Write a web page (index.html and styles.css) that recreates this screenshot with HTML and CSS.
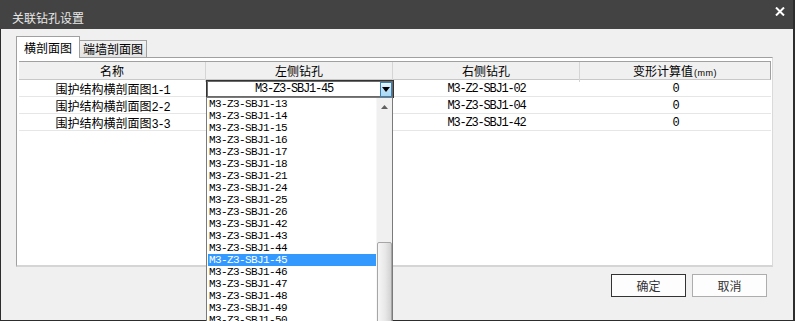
FILE: index.html
```html
<!DOCTYPE html>
<html lang="zh-CN">
<head>
  <meta charset="UTF-8">
  <title>关联钻孔设置</title>
  <link rel="stylesheet" href="styles.css">
</head>
<body>

<div class="window">
  <div class="titlebar">
    <span class="title">关联钻孔设置</span>
    <svg class="close" width="10" height="9" viewBox="0 0 10 9">
      <path d="M1 0.5 L9 8.5 M9 0.5 L1 8.5" stroke="#fff" stroke-width="2"/>
    </svg>
  </div>

  <div class="client">
    <div class="tabs">
      <div class="tab active">横剖面图</div>
      <div class="tab">端墙剖面图</div>
    </div>

    <div class="page">
      <div class="grid">
        <div class="row head">
          <div class="cell">名称</div>
          <div class="cell">左侧钻孔</div>
          <div class="cell">右侧钻孔</div>
          <div class="cell">变形计算值<span class="unit">(mm)</span></div>
        </div>

        <div class="row">
          <div class="cell">围护结构横剖面图<span class="mono">1-1</span></div>
          <div class="cell edit">
            <div class="combo">
              <span class="combo-text mono">M3-Z3-SBJ1-45</span>
              <span class="drop-btn">
                <svg width="8" height="5" viewBox="0 0 8 5"><path d="M0 0 H8 L4 5 Z" fill="#000"/></svg>
              </span>
              <div class="droplist">
                <ul class="items">
                  <li>M3-Z3-SBJ1-13</li>
                  <li>M3-Z3-SBJ1-14</li>
                  <li>M3-Z3-SBJ1-15</li>
                  <li>M3-Z3-SBJ1-16</li>
                  <li>M3-Z3-SBJ1-17</li>
                  <li>M3-Z3-SBJ1-18</li>
                  <li>M3-Z3-SBJ1-21</li>
                  <li>M3-Z3-SBJ1-24</li>
                  <li>M3-Z3-SBJ1-25</li>
                  <li>M3-Z3-SBJ1-26</li>
                  <li>M3-Z3-SBJ1-42</li>
                  <li>M3-Z3-SBJ1-43</li>
                  <li>M3-Z3-SBJ1-44</li>
                  <li class="selected">M3-Z3-SBJ1-45</li>
                  <li>M3-Z3-SBJ1-46</li>
                  <li>M3-Z3-SBJ1-47</li>
                  <li>M3-Z3-SBJ1-48</li>
                  <li>M3-Z3-SBJ1-49</li>
                  <li>M3-Z3-SBJ1-50</li>
                </ul>
                <div class="vscroll">
                  <div class="up">
                    <svg width="7" height="4" viewBox="0 0 7 4"><path d="M0 4 H7 L3.5 0 Z" fill="#606060"/></svg>
                  </div>
                  <div class="thumb"></div>
                </div>
              </div>
            </div>
          </div>
          <div class="cell mono">M3-Z2-SBJ1-02</div>
          <div class="cell mono">0</div>
        </div>

        <div class="row">
          <div class="cell">围护结构横剖面图<span class="mono">2-2</span></div>
          <div class="cell"></div>
          <div class="cell mono">M3-Z3-SBJ1-04</div>
          <div class="cell mono">0</div>
        </div>

        <div class="row">
          <div class="cell">围护结构横剖面图<span class="mono">3-3</span></div>
          <div class="cell"></div>
          <div class="cell mono">M3-Z3-SBJ1-42</div>
          <div class="cell mono">0</div>
        </div>
      </div>
    </div>

    <div class="buttons">
      <button class="btn default">确定</button>
      <button class="btn">取消</button>
    </div>
  </div>
</div>

</body>
</html>
```

FILE: styles.css
```css
* {
  box-sizing: border-box;
}
html, body {
  margin: 0;
}
body {
  width: 795px;
  height: 321px;
  overflow: hidden;
  background: #2d2d2d;
  font-family: "Noto Sans CJK SC", sans-serif;
  font-size: 12px;
  color: #000;
}
.window {
  width: 793px;
  height: 320px;
  display: flex;
  flex-direction: column;
}
.titlebar {
  height: 29px;
  background: #434343;
  display: flex;
  justify-content: space-between;
  align-items: flex-start;
  padding: 10px 8px 0 12px;
}
.title {
  color: #e8e8e8;
  font-size: 12px;
  line-height: 16px;
}
.close {
  margin-top: -3px;
}
.client {
  flex: 1;
  margin-left: 1px;
  background: #f0f0f0;
  padding: 7px 20px 0 15px;
}

/* tabs */
.tabs {
  height: 21px;
  display: flex;
  align-items: flex-end;
}
.tab {
  height: 17px;
  width: 67px;
  line-height: 16px;
  text-align: center;
  border: 1px solid #a0a0a0;
  border-bottom: none;
  border-left: none;
  background: linear-gradient(#f2f2f2, #e3e3e3);
}
.tab.active {
  position: relative;
  z-index: 1;
  height: 22px;
  width: 64px;
  margin-bottom: -1px;
  border-left: 1px solid #a0a0a0;
  background: #fff;
  line-height: 22px;
}

/* page + grid */
.page {
  height: 210px;
  background: #fff;
  border-top: 1px solid #a0a0a0;
  border-left: 1px solid #a0a0a0;
  border-right: 1px solid #dadada;
  border-bottom: 2px solid #d5d5d5;
  padding: 3px 1px 0 2px;
}
.row {
  display: grid;
  grid-template-columns: 187px 187px 187px 1fr;
  height: 17px;
  border-bottom: 1px solid #e6e6e6;
}
.row .cell {
  text-align: center;
  line-height: 16px;
  padding-top: 1px;
  white-space: nowrap;
}
.row.head {
  height: 19px;
  background: #f0f0f0;
  border-top: 1px solid #a0a0a0;
  border-right: 1px solid #a0a0a0;
  border-bottom: 1px solid #c8c8c8;
}
.row.head .cell {
  padding-top: 0;
  line-height: 17px;
  border-right: 1px solid #d5d5d5;
}
.row.head .cell:last-child {
  border-right: none;
}
.unit {
  font-family: "Liberation Sans", sans-serif;
  font-size: 9px;
  letter-spacing: 0.5px;
  margin-left: 1px;
}
.mono {
  font-family: "Liberation Mono", monospace;
  font-size: 12px;
  letter-spacing: -1.2px;
}

/* combo box in edit cell */
.row .cell.edit {
  padding: 0;
  position: relative;
  z-index: 2;
}
.combo {
  position: relative;
  width: 188px;
  height: 18px;
  border: 1px solid #333;
  box-shadow: inset 1px 1px 0 #6a6a6a, inset -1px -1px 0 #6a6a6a;
  background: #fff;
  display: flex;
  align-items: center;
}
.combo-text {
  flex: 1;
  text-align: center;
  line-height: 14px;
  padding-left: 1px;
}
.drop-btn {
  width: 12px;
  height: 15px;
  margin-right: 1px;
  border: 1px solid #3c7fb1;
  background: linear-gradient(#eaf6fd, #bfe1f8 50%, #a7d9f5);
  display: flex;
  align-items: center;
  justify-content: center;
}

/* dropdown list */
.droplist {
  position: absolute;
  top: 100%;
  left: -1px;
  width: 187px;
  height: 240px;
  border: 1px solid #7a7a7a;
  background: #fff;
  display: flex;
  text-align: left;
}
.items {
  flex: 1;
  list-style: none;
  margin: 0;
  padding: 0 0 0 1px;
}
.items li {
  height: 12px;
  line-height: 13px;
  padding-left: 1px;
  font-family: "Liberation Mono", monospace;
  font-size: 11px;
  letter-spacing: -0.6px;
}
.items li.selected {
  background: #3399ff;
  color: #fff;
}
.vscroll {
  width: 16px;
  background: #f0f0f0;
  border-left: 1px solid #f7f7f7;
}
.up {
  height: 17px;
  display: flex;
  align-items: center;
  justify-content: center;
}
.thumb {
  margin: 127px 0 0 0;
  width: 15px;
  height: 100px;
  border: 1px solid #a6a6a6;
  border-radius: 2px;
  background: linear-gradient(to right, #f6f6f6, #e8e8e8 55%, #d2d2d2);
}

/* buttons */
.buttons {
  display: flex;
  justify-content: flex-end;
  gap: 6px;
  margin-top: 7px;
  padding-right: 6px;
}
.btn {
  width: 75px;
  height: 23px;
  padding: 0;
  border: 1px solid #adadad;
  background: #fdfdfd;
  color: #333;
  font-family: "Noto Sans CJK SC", sans-serif;
  font-size: 12px;
  line-height: 20px;
}
.btn.default {
  border-color: #333;
}
```
